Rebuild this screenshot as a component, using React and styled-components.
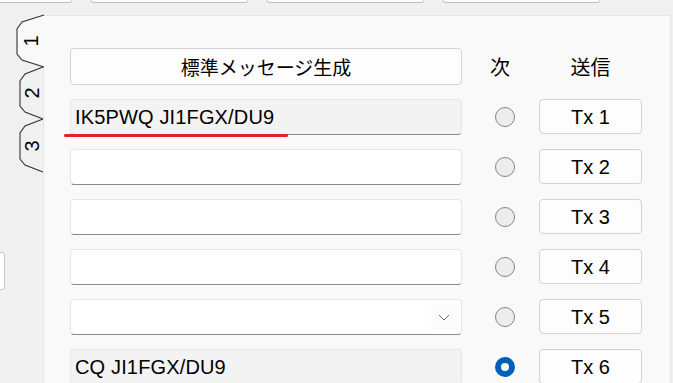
import React from "react";
import styled, { createGlobalStyle } from "styled-components";

const GlobalStyles = createGlobalStyle`
  html, body {
    margin: 0;
    padding: 0;
    background: #f0f0f0;
  }
  body {
    font-family: "Liberation Sans", "Noto Sans CJK JP", sans-serif;
    color: #000;
  }
`;

const rows = [
  { text: "IK5PWQ JI1FGX/DU9", kind: "readonly", marked: true },
  { text: "", kind: "edit" },
  { text: "", kind: "edit" },
  { text: "", kind: "edit" },
  { text: "", kind: "combo" },
  { text: "CQ JI1FGX/DU9", kind: "readonly", checked: true },
];

const tabs = [
  { label: "1", selected: true, width: 27, height: 52 },
  { label: "2", width: 23, height: 52 },
  { label: "3", width: 23, height: 53 },
];

const TabShape = ({ w, h, selected }) => {
  const outline = `M${w} 0 L5 7 L0 14 V${h - 13} L5 ${h - 7} L${w} ${h}`;
  return (
    <TabSvg width={w} height={h} viewBox={`0 0 ${w} ${h}`}>
      <path d={outline + " Z"} fill={selected ? "#f9f9f9" : "#f0f0f0"} stroke="none" />
      <path d={outline} fill="none" stroke="#333" strokeWidth="1.1" />
    </TabSvg>
  );
};

const App = () => {
  return (
    <>
      <GlobalStyles />
      <Screen>
        <TopBar>
          <TopButton $first />
          <TopButton />
          <TopButton />
          <TopButton />
        </TopBar>
        <Body>
          <Side>
            <StrayColumn>
              <StrayField />
            </StrayColumn>
            <TabStack>
              {tabs.map((t) => (
                <Tab
                  key={t.label}
                  $selected={t.selected}
                  style={{ width: t.width, height: t.height }}
                >
                  <TabShape w={t.width} h={t.height} selected={t.selected} />
                  <TabLabel>{t.label}</TabLabel>
                </Tab>
              ))}
            </TabStack>
          </Side>
          <Panel>
            <Grid>
              <GenerateButton>標準メッセージ生成</GenerateButton>
              <HeadCell $nudge>次</HeadCell>
              <HeadCell>送信</HeadCell>
              {rows.map((r, i) => (
                <React.Fragment key={i}>
                  <FieldWrap>
                    <Field $kind={r.kind}>
                      <FieldText>{r.text}</FieldText>
                      {r.kind === "combo" && (
                        <Chevron>
                          <svg width="12" height="7" viewBox="0 0 12 7">
                            <path d="M1 1 L6 6 L11 1" fill="none" stroke="#6a6a6a" strokeWidth="1" />
                          </svg>
                        </Chevron>
                      )}
                    </Field>
                    {r.marked && <RedMark />}
                  </FieldWrap>
                  <RadioCell>
                    <Radio $checked={r.checked} />
                  </RadioCell>
                  <TxButton>Tx {i + 1}</TxButton>
                </React.Fragment>
              ))}
            </Grid>
          </Panel>
        </Body>
      </Screen>
    </>
  );
};

const Screen = styled.div`
  width: 673px;
  height: 383px;
  overflow: hidden;
  display: flex;
  flex-direction: column;
  background: #f0f0f0;
`;

const TopBar = styled.div`
  height: 3px;
  overflow: hidden;
  display: flex;
  align-items: flex-end;
  gap: 17px;
  flex-shrink: 0;
`;

const TopButton = styled.div`
  flex-shrink: 0;
  width: 159px;
  height: 30px;
  margin-left: ${(p) => (p.$first ? "-86px" : "0")};
  box-sizing: border-box;
  background: #fdfdfd;
  border: 1px solid #bdbdbd;
  border-radius: 4px;
`;

const Body = styled.div`
  display: flex;
  margin-top: 12px;
  flex: 1;
  min-height: 0;
`;

const Side = styled.div`
  display: flex;
  width: 43px;
  flex-shrink: 0;
`;

const StrayColumn = styled.div`
  width: 5px;
  overflow: hidden;
`;

const StrayField = styled.div`
  margin-top: 237px;
  margin-left: -20px;
  width: 25px;
  height: 38px;
  box-sizing: border-box;
  background: #fff;
  border: 1px solid #c8c8c8;
  border-radius: 3px;
`;

const TabStack = styled.div`
  flex: 1;
  display: flex;
  flex-direction: column;
  align-items: flex-end;
`;

const Tab = styled.div`
  position: relative;
  z-index: ${(p) => (p.$selected ? 2 : 1)};
  margin-right: ${(p) => (p.$selected ? "-1px" : "0")};
  display: flex;
  align-items: center;
  justify-content: center;
  padding-left: ${(p) => (p.$selected ? "0" : "1px")};
  box-sizing: border-box;
`;

const TabSvg = styled.svg`
  position: absolute;
  left: 0;
  top: 0;
  overflow: visible;
`;

const TabLabel = styled.span`
  position: relative;
  display: block;
  font-size: 20px;
  line-height: 1;
  transform: rotate(-90deg);
`;

const Panel = styled.div`
  flex: 1;
  margin-right: 2px;
  background: #f9f9f9;
  border: 1px solid #e5e5e5;
  border-bottom: none;
  position: relative;
  z-index: 1;
`;

const Grid = styled.div`
  display: grid;
  grid-template-columns: 412px 46px 114px;
  grid-auto-rows: 36px;
  row-gap: 14px;
  padding: 33px 0 0 26px;
  align-items: center;
`;

const GenerateButton = styled.div`
  width: 392px;
  height: 37px;
  margin-bottom: 1px;
  box-sizing: border-box;
  background: #fdfdfd;
  border: 1px solid #d2d2d2;
  border-radius: 4px;
  display: flex;
  align-items: center;
  justify-content: center;
  font-size: 19px;
  padding-bottom: 1px;
`;

const HeadCell = styled.div`
  font-size: 20px;
  text-align: center;
  justify-self: ${(p) => (p.$nudge ? "start" : "end")};
  width: ${(p) => (p.$nudge ? "36px" : "103px")};
  padding-bottom: 2px;
`;

const FieldWrap = styled.div`
  position: relative;
  width: 392px;
  height: 36px;
`;

const Field = styled.div`
  height: 36px;
  box-sizing: border-box;
  display: flex;
  align-items: center;
  background: ${(p) => (p.$kind === "readonly" ? "#f3f3f3" : "#ffffff")};
  border: 1px solid #e6e6e6;
  border-bottom: 1px solid #8a8a8a;
  border-radius: 4px;
  padding-left: 4px;
`;

const FieldText = styled.span`
  flex: 1;
  font-size: 20px;
  letter-spacing: 0.15px;
  white-space: nowrap;
  padding-top: 1px;
`;

const Chevron = styled.div`
  width: 26px;
  height: 28px;
  margin-right: 4px;
  border-radius: 3px;
  background: #fbfbfb;
  display: flex;
  align-items: center;
  justify-content: center;
`;

const RedMark = styled.div`
  position: absolute;
  left: -6px;
  top: 35px;
  width: 224px;
  height: 3px;
  border-radius: 2px;
  background: #e3202b;
`;

const RadioCell = styled.div`
  display: flex;
  justify-content: center;
`;

const Radio = styled.div`
  width: 20px;
  height: 20px;
  box-sizing: border-box;
  border-radius: 50%;
  background: ${(p) => (p.$checked ? "#0060b8" : "#ededed")};
  border: ${(p) => (p.$checked ? "none" : "1px solid #858585")};
  display: flex;
  align-items: center;
  justify-content: center;

  &::after {
    content: "";
    display: ${(p) => (p.$checked ? "block" : "none")};
    width: 8px;
    height: 8px;
    border-radius: 50%;
    background: #fff;
  }
`;

const TxButton = styled.div`
  justify-self: end;
  align-self: start;
  width: 103px;
  height: 35px;
  box-sizing: border-box;
  background: #fdfdfd;
  border: 1px solid #d2d2d2;
  border-radius: 4px;
  display: flex;
  align-items: center;
  justify-content: center;
  font-size: 20px;
  padding-top: 1px;
`;

export default App;
